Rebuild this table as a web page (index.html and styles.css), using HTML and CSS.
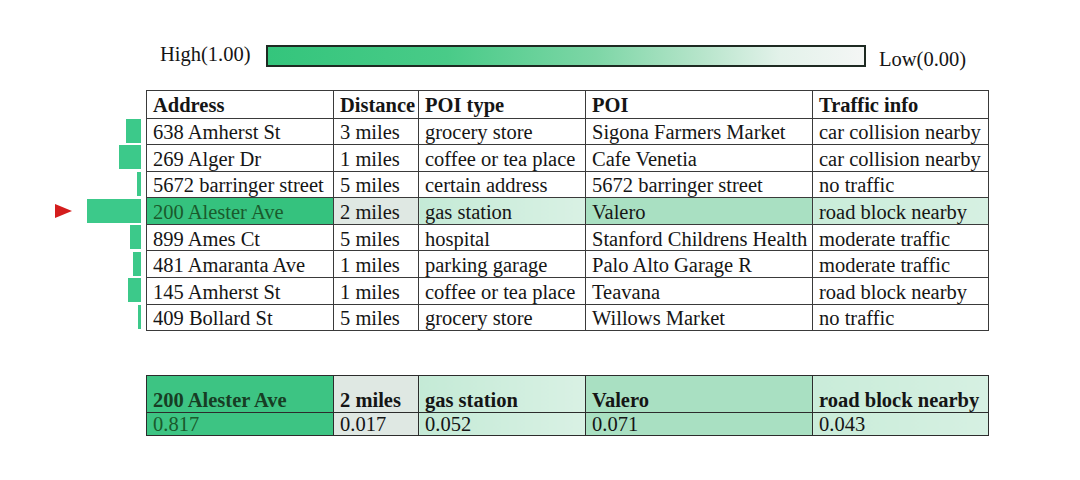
FILE: index.html
```html
<!DOCTYPE html>
<html>
<head>
<meta charset="utf-8">
<link rel="stylesheet" href="styles.css">
</head>
<body>
<div class="page">
  <div class="legend">
    <span class="legend-high">High(1.00)</span>
    <div class="legend-bar"></div>
    <span class="legend-low">Low(0.00)</span>
  </div>

  <div class="main">
    <div class="bars">
      <div class="bar-head"></div>
      <div class="bar-row"><div class="bar" style="width:15px"></div></div>
      <div class="bar-row"><div class="bar" style="width:22px"></div></div>
      <div class="bar-row"><div class="bar" style="width:4px"></div></div>
      <div class="bar-row"><div class="arrow"></div><div class="bar" style="width:54px"></div></div>
      <div class="bar-row"><div class="bar" style="width:11px"></div></div>
      <div class="bar-row"><div class="bar" style="width:8px"></div></div>
      <div class="bar-row"><div class="bar" style="width:13px"></div></div>
      <div class="bar-row"><div class="bar" style="width:3px"></div></div>
    </div>

    <table class="grid">
      <colgroup>
        <col class="c1"><col class="c2"><col class="c3"><col class="c4"><col class="c5">
      </colgroup>
      <tr class="head">
        <th>Address</th><th>Distance</th><th>POI type</th><th>POI</th><th>Traffic info</th>
      </tr>
      <tr><td>638 Amherst St</td><td>3 miles</td><td>grocery store</td><td>Sigona Farmers Market</td><td>car collision nearby</td></tr>
      <tr><td>269 Alger Dr</td><td>1 miles</td><td>coffee or tea place</td><td>Cafe Venetia</td><td>car collision nearby</td></tr>
      <tr><td>5672 barringer street</td><td>5 miles</td><td>certain address</td><td>5672 barringer street</td><td>no traffic</td></tr>
      <tr class="hl"><td class="h-addr">200 Alester Ave</td><td class="h-dist">2 miles</td><td class="h-type">gas station</td><td class="h-poi">Valero</td><td class="h-traf">road block nearby</td></tr>
      <tr><td>899 Ames Ct</td><td>5 miles</td><td>hospital</td><td>Stanford Childrens Health</td><td>moderate traffic</td></tr>
      <tr><td>481 Amaranta Ave</td><td>1 miles</td><td>parking garage</td><td>Palo Alto Garage R</td><td>moderate traffic</td></tr>
      <tr><td>145 Amherst St</td><td>1 miles</td><td>coffee or tea place</td><td>Teavana</td><td>road block nearby</td></tr>
      <tr><td>409 Bollard St</td><td>5 miles</td><td>grocery store</td><td>Willows Market</td><td>no traffic</td></tr>
    </table>
  </div>

  <div class="detail-wrap">
    <table class="grid detail">
      <colgroup>
        <col class="c1"><col class="c2"><col class="c3"><col class="c4"><col class="c5">
      </colgroup>
      <tr class="dhead">
        <th class="h-addr">200 Alester Ave</th><th class="h-dist">2 miles</th><th class="h-type">gas station</th><th class="h-poi">Valero</th><th class="h-traf">road block nearby</th>
      </tr>
      <tr class="dvals">
        <td class="h-addr">0.817</td><td class="h-dist">0.017</td><td class="h-type">0.052</td><td class="h-poi">0.071</td><td class="h-traf">0.043</td>
      </tr>
    </table>
  </div>
</div>
</body>
</html>
```

FILE: styles.css
```css
html, body {
  margin: 0;
  padding: 0;
  background: #ffffff;
}

body {
  font-family: "Liberation Serif", "Times New Roman", serif;
  color: #151515;
  width: 1080px;
  height: 480px;
  overflow: hidden;
}

.page {
  padding-top: 44px;
}

.legend {
  display: flex;
  align-items: center;
  height: 24px;
  padding-left: 160px;
}

.legend-high {
  font-size: 20.5px;
  width: 106px;
  line-height: 24px;
  margin-top: -4px;
}

.legend-bar {
  width: 596px;
  height: 18px;
  border: 2px solid #1e2a22;
  background: linear-gradient(to right, #34c57c 0%, #49cb88 30%, #7dd6a6 55%, #b4e4c9 72%, #e3f2ea 86%, #f4f6f5 100%);
}

.legend-low {
  font-size: 20.5px;
  margin-left: 13px;
  margin-top: 6px;
  line-height: 24px;
}

.main {
  display: flex;
  margin-top: 22px;
}

.bars {
  width: 141px;
  margin-right: 5px;
  display: flex;
  flex-direction: column;
}

.bar-head {
  height: 27.5px;
}

.bar-row {
  height: 26.6px;
  display: flex;
  justify-content: flex-end;
  align-items: center;
}

.bar {
  height: 24px;
  background: #3cc98a;
}

.arrow {
  width: 0;
  height: 0;
  border-top: 7px solid transparent;
  border-bottom: 7px solid transparent;
  border-left: 17px solid #d41d1d;
  margin-right: 15px;
}

.grid {
  border-collapse: collapse;
  table-layout: fixed;
  width: 842px;
  font-size: 20.5px;
}

.grid .c1 { width: 187px; }
.grid .c2 { width: 85px; }
.grid .c3 { width: 167px; }
.grid .c4 { width: 227px; }
.grid .c5 { width: 176px; }

.grid th,
.grid td {
  border: 1px solid #3a3a3a;
  padding: 0 0 0 6px;
  text-align: left;
  white-space: nowrap;
  overflow: hidden;
  line-height: 20px;
}

.grid tr {
  height: 26.6px;
}

.grid tr.head {
  height: 27.5px;
}

.grid th {
  font-weight: bold;
  vertical-align: middle;
  padding-top: 2px;
}

.grid td {
  vertical-align: middle;
  padding-top: 2px;
}

.h-addr { background: #35c27e; color: #1a5a2c; }
.h-dist { background: #dfe8e3; }
.h-type { background: linear-gradient(to right, #c4ead6, #d9f1e4); }
.h-poi  { background: #a9e0c2; }
.h-traf { background: linear-gradient(to right, #c9ecd9, #d6f0e2); }

.detail-wrap {
  margin-top: 44px;
  padding-left: 146px;
}

.detail th,
.detail td {
  border-color: #2c2c2c;
}

.detail tr.dhead {
  height: 37px;
}

.detail tr.dhead th {
  vertical-align: bottom;
  padding-bottom: 2px;
}

.detail tr.dvals {
  height: 23px;
}

.detail tr.dvals td {
  padding-top: 0;
  line-height: 20px;
}

.detail th.h-addr,
.detail td.h-addr {
  background: #3dc483;
}

.detail th.h-addr { color: #173d24; }
```
